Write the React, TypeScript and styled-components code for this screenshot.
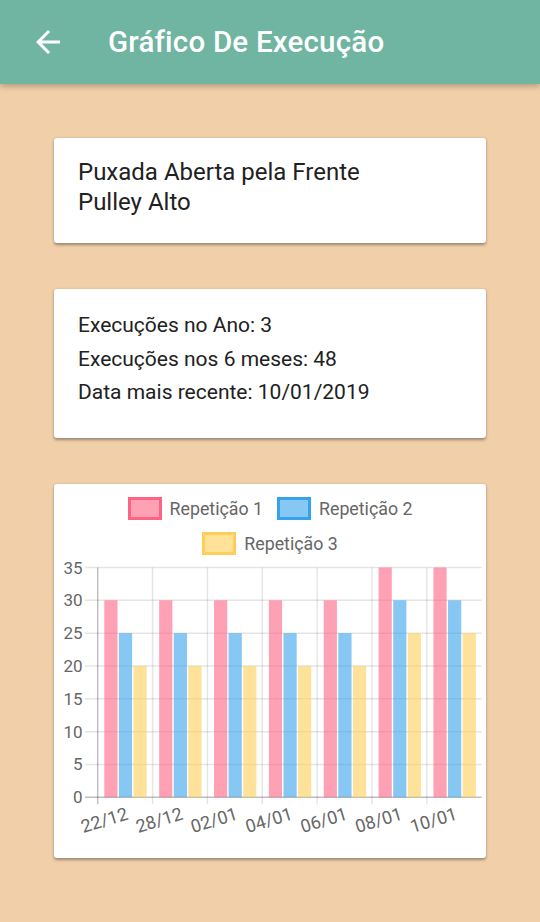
import * as React from "react";
import styled, { createGlobalStyle } from "styled-components";
import { MdArrowBack } from "react-icons/md";

const GlobalStyle = createGlobalStyle`
  html, body {
    margin: 0;
    padding: 0;
    background: #f0cfa9;
    font-family: Roboto, "Noto Sans", sans-serif;
  }
`;

const Page = styled.div`
  min-height: 922px;
  background: #f0cfa9;
`;

const AppBar = styled.header`
  display: flex;
  align-items: center;
  height: 84px;
  background: #6fb5a1;
  color: white;
  box-shadow: 0 2px 6px rgba(0, 0, 0, 0.28);
  position: relative;
  z-index: 1;
`;

const BackButton = styled.div`
  display: flex;
  align-items: center;
  justify-content: center;
  width: 84px;
  height: 84px;
  margin-left: 6px;
  font-size: 36px;
`;

const Title = styled.h1`
  margin: 0 0 0 18px;
  font-size: 29.5px;
  font-weight: 500;
  letter-spacing: 0.2px;
`;

const Content = styled.main`
  display: flex;
  flex-direction: column;
  gap: 46px;
  padding: 54px 54px 0;
`;

const Card = styled.section<{ $pad: string }>`
  background: white;
  border-radius: 3px;
  box-shadow: 0 1.5px 3px rgba(0, 0, 0, 0.35);
  padding: ${(p) => p.$pad};
  color: #212121;
`;

const ExerciseName = styled.div`
  font-size: 24px;
  line-height: 30px;
`;

const StatLine = styled.div`
  font-size: 21px;
  line-height: 33.5px;
`;

const Legend = styled.div`
  display: flex;
  flex-wrap: wrap;
  justify-content: center;
  column-gap: 14px;
  padding: 7px 60px 0;
`;

const LegendItem = styled.div`
  display: flex;
  align-items: center;
  gap: 8px;
  height: 35px;
  font-size: 17.8px;
  color: #666;
`;

const LegendBox = styled.span<{ $fill: string; $border: string }>`
  box-sizing: border-box;
  width: 34px;
  height: 23px;
  background: ${(p) => p.$fill};
  border: 3px solid ${(p) => p.$border};
`;

const ChartSvg = styled.svg`
  display: block;
  overflow: visible;
  font-family: Roboto, "Noto Sans", sans-serif;
`;

const datasets = [
  { label: "Repetição 1", fill: "rgba(255,99,132,0.6)", border: "rgb(255,99,132)", data: [30, 30, 30, 30, 30, 35, 35] },
  { label: "Repetição 2", fill: "rgba(54,162,235,0.6)", border: "rgb(54,162,235)", data: [25, 25, 25, 25, 25, 30, 30] },
  { label: "Repetição 3", fill: "rgba(255,206,86,0.6)", border: "rgb(255,206,86)", data: [20, 20, 20, 20, 20, 25, 25] },
];
const labels = ["22/12", "28/12", "02/01", "04/01", "06/01", "08/01", "10/01"];

const left = 43.7;
const right = 427.7;
const top = 6.5;
const bottom = 236.3;
const catW = (right - left) / labels.length;
const yOf = (v: number) => bottom - ((bottom - top) * v) / 35;

const BarChart = () => (
  <ChartSvg width={432} height={297} viewBox="0 0 432 297">
    {[0, 5, 10, 15, 20, 25, 30, 35].map((v) => (
      <g key={v}>
        <line
          x1={31}
          x2={right}
          y1={yOf(v)}
          y2={yOf(v)}
          stroke={v === 0 ? "rgba(0,0,0,0.25)" : "rgba(0,0,0,0.1)"}
          strokeWidth={1.5}
        />
        <text x={28.5} y={yOf(v)} textAnchor="end" dominantBaseline="central" fontSize={17} fill="#666">
          {v}
        </text>
      </g>
    ))}
    {labels.map((l, i) => (
      <line
        key={l}
        x1={left + i * catW}
        x2={left + i * catW}
        y1={top}
        y2={bottom + 7}
        stroke={i === 0 ? "rgba(0,0,0,0.25)" : "rgba(0,0,0,0.1)"}
        strokeWidth={1.5}
      />
    ))}
    {labels.map((l, i) =>
      datasets.map((d, j) => (
        <rect
          key={l + j}
          x={left + i * catW + 6.6 + j * 14.6}
          y={yOf(d.data[i])}
          width={13.2}
          height={bottom - yOf(d.data[i])}
          fill={d.fill}
        />
      ))
    )}
    {labels.map((l, i) => {
      const cx = left + (i + 0.5) * catW;
      return (
        <text
          key={l}
          x={cx}
          y={245}
          textAnchor="end"
          dominantBaseline="hanging"
          fontSize={18}
          fill="#666"
          transform={`rotate(-17 ${cx} 245)`}
        >
          {l}
        </text>
      );
    })}
  </ChartSvg>
);

export default function App() {
  return (
    <Page>
      <GlobalStyle />
      <AppBar>
        <BackButton>
          <MdArrowBack />
        </BackButton>
        <Title>Gráfico De Execução</Title>
      </AppBar>
      <Content>
        <Card $pad="19px 24px 26px">
          <ExerciseName>Puxada Aberta pela Frente</ExerciseName>
          <ExerciseName>Pulley Alto</ExerciseName>
        </Card>
        <Card $pad="20px 24px 28px">
          <StatLine>Execuções no Ano: 3</StatLine>
          <StatLine>Execuções nos 6 meses: 48</StatLine>
          <StatLine>Data mais recente: 10/01/2019</StatLine>
        </Card>
        <Card $pad="0">
          <Legend>
            {datasets.map((d) => (
              <LegendItem key={d.label}>
                <LegendBox $fill={d.fill} $border={d.border} />
                {d.label}
              </LegendItem>
            ))}
          </Legend>
          <BarChart />
        </Card>
      </Content>
    </Page>
  );
}
